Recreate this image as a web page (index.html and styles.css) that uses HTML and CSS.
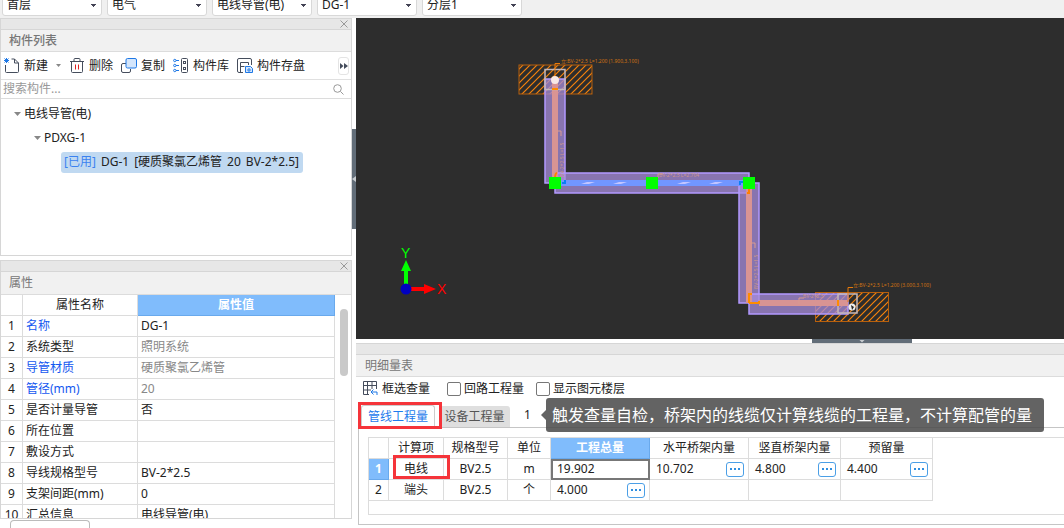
FILE: index.html
```html
<!DOCTYPE html>
<html lang="zh-CN">
<head>
<meta charset="utf-8">
<title>构件列表</title>
<link rel="stylesheet" href="styles.css">
</head>
<body>
<div class="app">
  <header class="topbar">
    <select class="pick" aria-label="楼层"><option>首层</option></select>
    <select class="pick" aria-label="专业"><option>电气</option></select>
    <select class="pick" aria-label="构件类型"><option>电线导管(电)</option></select>
    <select class="pick" aria-label="构件"><option>DG-1</option></select>
    <select class="pick" aria-label="分层"><option>分层1</option></select>
  </header>

  <main class="workspace">
    <aside class="sidebar">
      <section class="panel panel-list">
        <div class="strip"><button class="close" aria-label="关闭构件列表"><svg width="8" height="8" viewBox="0 0 8 8"><path d="M.5.5l7 7M7.500.5l-7 7"/></svg></button></div>
        <h2 class="title title-strong">构件列表</h2>
        <div class="tools">
          <button class="tool tool-new"><svg class="icon" viewBox="0 0 16 16"><path d="M1.500 7v6.500q0 1 1 1h11q1 0 1-1V5l-4-4H7.500M10.500 1v4h4"/><path class="blue" d="M.5.5l4 4M4.500.5l-4 4M2.500 0v5M0 2.500h5" /></svg>新建<span class="caret caret-pale"></span></button>
          <button class="tool"><svg class="icon" viewBox="0 0 16 16"><path d="M1 3.500h14M5 3.500v-2q0-1 1-1h4q1 0 1 1v2M2.500 3.500v10q0 1 1 1h9q1 0 1-1v-10"/><path class="red" d="M6.500 6.500v5M9.500 6.500v5"/></svg>删除</button>
          <button class="tool tool-copy"><svg class="icon" viewBox="0 0 16 16"><path d="M5 5.500H2q-1.500 0-1.500 1.500v6q0 1.500 1.500 1.500h6q1.500 0 1.500-1.500v-2"/><rect class="bluefill" x="5" y=".5" width="10.500" height="9.500" rx="1.500"/></svg>复制</button>
          <button class="tool"><svg class="icon" viewBox="0 0 16 16"><rect x="8.500" y=".5" width="6" height="14" rx="1"/><rect x="10.500" y="3.500" width="2" height="2"/><rect x="10.500" y="9.500" width="2" height="2"/><path class="blue" d="M3 2.500h3M3 7.500h3M3 12.500h3"/><circle class="blue" cx="1.800" cy="2.500" r="1.200"/><circle class="blue" cx="1.800" cy="7.500" r="1.200"/><circle class="blue" cx="1.800" cy="12.500" r="1.200"/></svg>构件库</button>
          <button class="tool"><svg class="icon" viewBox="0 0 16 16"><path d="M6 14.500H2q-1.500 0-1.500-1.500V2Q.5.5 2 .5h11q1.500 0 1.500 1.500v5M3.500 14V4.500h8V7M3.500 8.500h4"/><path class="bluefill" d="M8.500 8.500h5l2 2v4h-7z"/><circle class="blue" cx="12" cy="12" r="1.200"/></svg>构件存盘</button>
          <button class="more" aria-label="更多"><svg width="8" height="6" viewBox="0 0 8 6"><path d="M0 0l3.500 3L0 6zM4 0l4 3-4 3z"/></svg></button>
        </div>
        <div class="search">
          <input type="text" class="search-box" placeholder="搜索构件..." aria-label="搜索构件">
          <svg width="11" height="11" viewBox="0 0 11 11"><circle cx="4.500" cy="4.500" r="3.800"/><path d="M7.500 7.500l3 3"/></svg>
        </div>
        <ul class="tree">
          <li class="node level-1"><span class="caret caret-tree"></span>电线导管(电)</li>
          <li class="node level-2"><span class="caret caret-tree"></span>PDXG-1</li>
          <li class="node level-3"><span class="chosen"><span class="used">[已用]</span><span>DG-1</span><span>[硬质聚氯乙烯管</span><span>20</span><span>BV-2*2.5]</span></span></li>
        </ul>
      </section>

      <section class="panel panel-props">
        <div class="strip"><button class="close" aria-label="关闭属性"><svg width="8" height="8" viewBox="0 0 8 8"><path d="M.5.5l7 7M7.500.5l-7 7"/></svg></button></div>
        <h2 class="title title-tall">属性</h2>
        <div class="props-body">
          <table class="grid props">
            <colgroup><col class="c-no"><col class="c-name"><col></colgroup>
            <thead><tr><th></th><th>属性名称</th><th class="active">属性值</th></tr></thead>
            <tbody>
              <tr><td>1</td><td class="key">名称</td><td>DG-1</td></tr>
              <tr><td>2</td><td>系统类型</td><td class="dim">照明系统</td></tr>
              <tr><td>3</td><td class="key">导管材质</td><td class="dim">硬质聚氯乙烯管</td></tr>
              <tr><td>4</td><td class="key">管径(mm)</td><td class="dim">20</td></tr>
              <tr><td>5</td><td>是否计量导管</td><td>否</td></tr>
              <tr><td>6</td><td>所在位置</td><td></td></tr>
              <tr><td>7</td><td>敷设方式</td><td></td></tr>
              <tr><td>8</td><td>导线规格型号</td><td>BV-2*2.5</td></tr>
              <tr><td>9</td><td>支架间距(mm)</td><td>0</td></tr>
              <tr><td>10</td><td>汇总信息</td><td>电线导管(电)</td></tr>
            </tbody>
          </table>
          <div class="scroll"><div class="thumb"></div></div>
        </div>
      </section>
      <div class="stub"></div>
    </aside>

    <div class="gutter"><button class="handle handle-side" aria-label="收起侧栏"></button></div>

    <div class="content">
      <svg class="scene" viewBox="356 18 708 321" preserveAspectRatio="xMidYMid slice" role="img" aria-label="管线模型">
        <defs>
          <pattern id="hatch" width="7" height="7" patternUnits="userSpaceOnUse"><path d="M-1 8L8-1M-1 1l2-2M6 8l2-2" stroke="#f5820b" stroke-width="1.200"/></pattern>
        </defs>
        <g class="box"><rect x="519" y="65" width="73" height="29"/><rect x="815.500" y="292.500" width="73" height="29"/></g>
        <g class="tube">
          <rect x="545" y="79" width="20" height="104"/>
          <rect x="555" y="173" width="194" height="20"/>
          <rect x="739" y="183" width="20" height="120"/>
          <rect x="749" y="294" width="99" height="20"/>
        </g>
        <g class="core"><path d="M555 80v99M749 187v116M759 303h89"/></g>
        <path d="M556 183h193" stroke="#7196ff" stroke-width="6"/>
        <path class="dash" d="M581 184l6-2h8l-6 2zM613 184l6-2h8l-6 2zM677 184l6-2h8l-6 2zM709 184l6-2h8l-6 2z"/>
        <g class="join"><rect x="545" y="69.500" width="20" height="20"/><path d="M838 294h19v19h-19z"/></g>
        <g class="mark"><path d="M552 89h6M838 300v6M749 303v-9h3M749 303h10v-2"/></g>
        <g class="lead"><path d="M555 78V63.500h5M848 302v-14.500h5"/></g>
        <path class="faint" d="M557 131h4v5M751 243h4v5M658 178v-4h5M799 304v-6h5"/>
        <g class="tiny">
          <text x="561" y="63">立:BV-2*2.5 L=1.200 (1.900,3.100)</text>
          <text x="853" y="287">立:BV-2*2.5 L=1.200 (3.000,3.100)</text>
        </g>
        <g class="tiny pale">
          <text x="659" y="177">BV-2*2.5 L=2.704</text>
          <text x="803" y="298">BV-2*2.5</text>
          <text transform="translate(564 177) rotate(-90)">BV-2*2.5 L=1.5</text>
          <text transform="translate(758 289) rotate(-90)">BV-2*2.5 L=1.5</text>
        </g>
        <circle cx="555" cy="80" r="4" fill="#f8e9e5"/>
        <circle cx="852" cy="307" r="3.500" fill="#eee"/><path d="M851 305l3 2-2 3z" fill="#222"/>
        <path d="M557 173q-2 0-2 6M747 193h2v-4" stroke="#ff7f00" stroke-width="2" fill="none"/>
        <path d="M562 183h3v-3M740 185v-3h4" stroke="#087ff5" stroke-width="2" fill="none"/>
        <g class="grip"><rect x="549" y="177" width="12" height="12"/><rect x="646" y="177" width="12" height="12"/><rect x="743" y="177" width="12" height="12"/></g>
        <g class="axis">
          <path d="M404 287v-16h-3l5-11 5 11h-3v16z" fill="#0f0"/>
          <path d="M410 287h14v-3l12 5-12 5v-3h-14z" fill="red"/>
          <circle cx="406" cy="289" r="5.500" fill="#0000c0"/>
          <text x="401" y="258" fill="#0f0">Y</text><text x="437" y="294" fill="red">X</text>
        </g>
      </svg>
      <div class="divider"><button class="handle handle-bottom" aria-label="收起明细量表"></button></div>

      <section class="detail">
        <div class="strip"></div>
        <h2 class="title">明细量表</h2>
        <div class="options">
          <button class="tool"><svg class="icon" viewBox="0 0 16 16"><path d="M7 13.500H1.500V.5h13V8M1.500 4.500h13M1.500 9H9M5.500.5v13M10 .5V8"/><path class="blue" d="M15 14v-3H9M11.500 8.500L9 11l2.500 2.500"/></svg>框选查量</button>
          <label class="check"><input type="checkbox">回路工程量</label>
          <label class="check"><input type="checkbox">显示图元楼层</label>
        </div>
        <div class="tabs">
          <div class="framed"><button class="tab tab-on">管线工程量</button><span class="frame frame-tab"></span></div>
          <button class="tab">设备工程量</button>
          <span class="step">1</span>
          <div class="tip" role="tooltip">触发查量自检，桥架内的线缆仅计算线缆的工程量，不计算配管的量</div>
        </div>
        <div class="sheet">
          <div class="sheet-inner">
            <table class="grid qty">
              <colgroup><col class="q-no"><col class="q-item"><col class="q-spec"><col class="q-unit"><col class="q-sum"><col class="q-sum"><col class="q-part"><col class="q-part"></colgroup>
              <thead><tr><th></th><th>计算项</th><th>规格型号</th><th>单位</th><th class="active">工程总量</th><th>水平桥架内量</th><th>竖直桥架内量</th><th>预留量</th></tr></thead>
              <tbody>
                <tr><td class="active">1</td><td class="framed">电线<span class="frame frame-cell"></span></td><td>BV2.5</td><td>m</td><td class="current">19.902</td>
                  <td><div class="val">10.702<button class="dots" aria-label="查看水平桥架内量"><i></i><i></i><i></i></button></div></td>
                  <td><div class="val">4.800<button class="dots" aria-label="查看竖直桥架内量"><i></i><i></i><i></i></button></div></td>
                  <td><div class="val">4.400<button class="dots" aria-label="查看预留量"><i></i><i></i><i></i></button></div></td></tr>
                <tr><td>2</td><td>端头</td><td>BV2.5</td><td>个</td>
                  <td><div class="val">4.000<button class="dots" aria-label="查看工程总量"><i></i><i></i><i></i></button></div></td><td></td><td></td><td></td></tr>
              </tbody>
            </table>
          </div>
        </div>
      </section>
    </div>
  </main>
</div>
</body>
</html>
```
FILE: styles.css
```css
* { box-sizing: border-box; }
body { margin: 0; background: #fff; color: #222; }
body, button, input, select { font-family: "Noto Sans", "Noto Sans CJK SC", sans-serif; font-size: 12px; line-height: 16px; }
button { margin: 0; padding: 0; border: 0; background: none; color: inherit; }
svg { display: block; flex: none; }

.app { display: flex; flex-direction: column; height: 100vh; overflow: hidden; }

.topbar { display: flex; align-items: flex-end; gap: 5px; flex: none; height: 18px; padding: 0 2px 2px; background: #f0f0f0; overflow: hidden; }
.pick {
  appearance: none; flex: none; width: 100px; height: 22px; padding: 0 16px 0 4px;
  border: 1px solid #d8d8d8; border-radius: 3px; color: #222;
  background: linear-gradient(#445, #445) no-repeat right 5px top 9px / 5px 1px,
    linear-gradient(#445, #445) no-repeat right 6px top 10px / 3px 1px,
    linear-gradient(#445, #445) no-repeat right 7px top 11px / 1px 1px, #fff;
}

.workspace { display: flex; flex: 1; min-height: 0; }
.sidebar { display: flex; flex-direction: column; flex: none; width: 352px; }
.panel { display: flex; flex-direction: column; border: 1px solid #d6d6d6; }
.panel-props { flex: 1; min-height: 0; margin-top: 4px; }

.strip { display: flex; justify-content: flex-end; align-items: center; flex: none; height: 11px; padding-right: 3px; background: #e7e7e7; border-bottom: 1px solid #d6d6d6; }
.close svg { fill: none; stroke: #999; }
.title { flex: none; margin: 0; padding: 3px 8px 2px; border-bottom: 1px solid #dcdcdc; background: #f1f1f1; color: #777; font-size: 12px; font-weight: 400; line-height: 16px; }
.title-strong { font-weight: 500; }
.title-tall { padding-bottom: 3px; }

.tools { display: flex; align-items: center; gap: 8px; height: 28px; padding: 0 2px 0 3px; border-bottom: 1px solid #e0e0e0; }
.tool { display: flex; align-items: center; gap: 4px; flex: none; }
.tool-new .caret { margin-left: 4px; }
.icon { width: 16px; height: 16px; fill: none; stroke: #454d5c; stroke-width: 1; }
.blue { stroke: #1e78e6; }
.red { stroke: #d22; }
.bluefill { fill: #d4e6fc; stroke: #1e78e6; }
.more { display: flex; align-items: center; justify-content: center; margin-left: auto; width: 11px; height: 18px; border: 1px solid #e4e4e4; border-radius: 3px; }
.more svg { fill: #454d5c; }

.caret { width: 5px; height: 3px; background: #888; clip-path: polygon(0 0, 100% 0, 50% 100%); }
.caret-tree { width: 7px; height: 4px; }

.search { display: flex; align-items: center; height: 19px; padding: 0 7px 0 2px; border-bottom: 1px solid #dcdcdc; }
.search-box { flex: 1; min-width: 0; height: 16px; padding: 0; border: 0; outline: 0; color: #222; }
.search-box::placeholder { color: #999; }
.search svg { fill: none; stroke: #999; }

.tree { min-height: 156px; margin: 0; padding: 3px 0 0; list-style: none; }
.node { display: flex; align-items: center; gap: 3px; height: 24px; }
.level-1 { padding-left: 13px; }
.level-2 { padding-left: 33px; }
.level-3 { padding-left: 60px; }
.chosen { display: flex; gap: 5px; padding: 2px 4px 3px 3px; border-radius: 3px; background: #c0d9f1; white-space: nowrap; }
.used { color: #3b82f0; }

.grid { border-spacing: 0; table-layout: fixed; }
.grid th, .grid td { height: 21px; padding: 0; border: 0 solid #dcdcdc; border-width: 0 1px 1px 0; font-weight: 400; white-space: nowrap; }
.grid .active { background: #80bcfc; border-color: #69a9ec; color: #fff; font-weight: 700; }

.props-body { display: flex; flex: 1; min-height: 0; overflow: hidden; }
.props { flex: 1; align-self: flex-start; width: 100%; }
.c-no { width: 22px; }
.c-name { width: 115px; }
.props td { padding-left: 3px; }
.props td:first-child { padding: 0; text-align: center; }
.props .key { color: #1458f0; }
.props .dim { color: #888; }
.scroll { flex: none; width: 16px; padding: 14px 3px 0 5px; }
.thumb { height: 67px; border-radius: 4px; background: #c9c9c9; }
.stub { flex: none; width: 80px; height: 8px; margin: 1px 0 0 10px; border: 1px solid #bbb; border-bottom: 0; border-radius: 4px 4px 0 0; }

.gutter { flex: none; width: 4px; padding-top: 111px; }
.handle { display: flex; align-items: center; justify-content: center; background: #626d78; }
.handle::after { content: ""; background: #c8ccd0; }
.handle-side { width: 4px; height: 100px; }
.handle-side::after { width: 4px; height: 6px; clip-path: polygon(100% 0, 100% 100%, 0 50%); }
.handle-bottom { width: 100px; height: 4px; }
.handle-bottom::after { width: 6px; height: 3px; clip-path: polygon(0 0, 100% 0, 50% 100%); }

.content { display: flex; flex-direction: column; flex: 1; min-width: 0; }
.scene { flex: 1; min-height: 0; width: 100%; background: #2d2d2d; }
.divider { display: flex; justify-content: flex-end; flex: none; height: 4px; padding-right: 152px; }
.box rect { fill: url(#hatch); stroke: #b8600d; stroke-width: 1; }
.tube rect { fill: #a78cdb; fill-opacity: .75; stroke: #b299ff; stroke-width: 1.500; }
.core { stroke: #d99493; stroke-width: 6; fill: none; }
.dash { fill: #c2c5ff; }
.join { fill: none; stroke: #c4b8bc; stroke-width: 1.500; }
.mark { fill: none; stroke: #ff8c00; stroke-width: 2; }
.lead { fill: none; stroke: #e87a0a; }
.faint { fill: none; stroke: #d99a90; }
.tiny { font-family: "Noto Sans", "Noto Sans CJK SC", sans-serif; font-size: 5px; fill: #d07412; }
.pale { fill: #cd978c; }
.grip { fill: #0f0; }
.axis { font-family: "Liberation Sans", sans-serif; font-size: 14px; }

.detail { flex: none; padding-bottom: 3px; }
.detail .strip { height: 12px; border-top: 1px solid #d6d6d6; }
.detail .title { padding-left: 9px; }
.options { display: flex; align-items: center; height: 23px; padding-left: 6px; }
.check { display: flex; align-items: center; gap: 3px; }
.options .tool { margin-right: 17px; }
.check + .check { margin-left: 12px; }
.check input { appearance: none; width: 14px; height: 14px; margin: 0; border: 1px solid #777; border-radius: 2px; background: #fff; }

.tabs { display: flex; align-items: flex-end; height: 27px; padding: 0 0 0 5px; position: relative; }
.framed { position: relative; }
.frame { position: absolute; border: 3px solid #f5343a; pointer-events: none; }
.frame-tab { inset: -3px -7px -2px -3px; }
.frame-cell { inset: -4px -7px 0 4px; z-index: 1; }
.tab { display: block; width: 71px; height: 21px; border-radius: 3px 3px 0 0; background: #dfdfdf; color: #555; text-align: center; }
.tab-on { width: 74px; height: 22px; border: 1px solid #ccc; border-bottom: 0; background: #fff; color: #1e7bec; }
.tabs > .tab { margin-left: 4px; }
.step { margin: 0 0 4px 14px; }
.tip { position: absolute; left: 190px; bottom: -5px; z-index: 2; padding: 5px 12px 5px 6px; border-radius: 3px; background: rgba(72, 72, 72, .85); color: #fff; font-size: 16px; line-height: 24px; white-space: nowrap; }
.tip::before { content: ""; position: absolute; left: -5px; top: 12px; width: 5px; height: 10px; background: inherit; clip-path: polygon(100% 0, 100% 100%, 0 50%); }

.sheet { margin-left: 2px; padding: 9px 0 9px 9px; border: 1px solid #c5c5c5; border-right: 0; }
.sheet-inner { height: 78px; border: 1px solid #dcdcdc; border-right: 0; }
.qty { width: 564px; text-align: center; }
.q-no { width: 20px; }
.q-item { width: 55px; }
.q-spec { width: 64px; }
.q-unit { width: 43px; }
.q-sum { width: 99px; }
.q-part { width: 92px; }
.qty .current { padding-left: 6px; outline: 2px solid #777; outline-offset: -2px; text-align: left; }
.val { display: flex; align-items: center; justify-content: space-between; padding: 0 4px 0 6px; }
.dots { display: flex; align-items: center; justify-content: center; gap: 2px; width: 18px; height: 15px; border: 1px solid #4b9fe6; border-radius: 3px; }
.dots i { width: 2px; height: 2px; background: #2f8ee0; }
```
